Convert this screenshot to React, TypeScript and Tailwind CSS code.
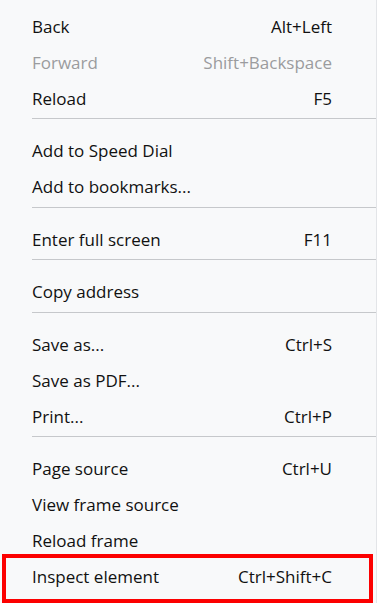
import React from 'react';

type Item = { label: string; shortcut?: string; disabled?: boolean; marked?: boolean };

const groups: Item[][] = [
  [
    { label: 'Back', shortcut: 'Alt+Left' },
    { label: 'Forward', shortcut: 'Shift+Backspace', disabled: true },
    { label: 'Reload', shortcut: 'F5' },
  ],
  [{ label: 'Add to Speed Dial' }, { label: 'Add to bookmarks...' }],
  [{ label: 'Enter full screen', shortcut: 'F11' }],
  [{ label: 'Copy address' }],
  [
    { label: 'Save as...', shortcut: 'Ctrl+S' },
    { label: 'Save as PDF...' },
    { label: 'Print...', shortcut: 'Ctrl+P' },
  ],
  [
    { label: 'Page source', shortcut: 'Ctrl+U' },
    { label: 'View frame source' },
    { label: 'Reload frame' },
    { label: 'Inspect element', shortcut: 'Ctrl+Shift+C', marked: true },
  ],
];

function MenuRow({ item }: { item: Item }) {
  return (
    <div
      className={`relative flex h-9 items-center justify-between pl-8 pr-[44px] ${
        item.disabled ? 'text-[#9b9c9e]' : 'text-[#111111]'
      }`}
    >
      <span>{item.label}</span>
      {item.shortcut && <span>{item.shortcut}</span>}
      {/* red annotation frame */}
      {item.marked && (
        <div className="absolute left-[2px] top-[-5px] h-[49px] w-[371px] border-[4px] border-[#fc0000]" />
      )}
    </div>
  );
}

export default function App() {
  return (
    <div
      className="h-[603px] w-[377px] overflow-hidden border-r border-[#e3e5e8] bg-[#f8f9fa] pt-[8px] text-[17px] leading-none"
      style={{ fontFamily: '"Open Sans", "Noto Sans", sans-serif' }}
    >
      {groups.map((group, gi) => (
        <div key={gi}>
          {gi > 0 && (
            <div className="pb-[13.5px] pt-[2px] pl-8">
              <div className="h-px bg-[#c6c8cb]" />
            </div>
          )}
          {group.map((item) => (
            <MenuRow key={item.label} item={item} />
          ))}
        </div>
      ))}
    </div>
  );
}
